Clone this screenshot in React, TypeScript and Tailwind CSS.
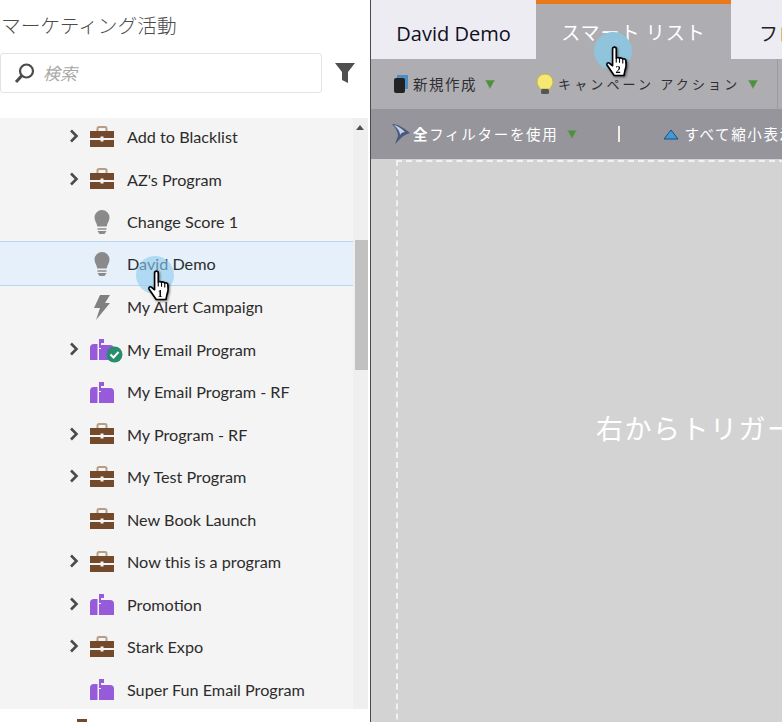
const jp = '"Noto Sans CJK JP", sans-serif';

type Kind = 'case' | 'bulb' | 'bolt' | 'mail' | 'mailOk';

const rows: { label: string; kind: Kind; arrow?: boolean; selected?: boolean }[] = [
  { label: 'Add to Blacklist', kind: 'case', arrow: true },
  { label: "AZ's Program", kind: 'case', arrow: true },
  { label: 'Change Score 1', kind: 'bulb' },
  { label: 'David Demo', kind: 'bulb', selected: true },
  { label: 'My Alert Campaign', kind: 'bolt' },
  { label: 'My Email Program', kind: 'mailOk', arrow: true },
  { label: 'My Email Program - RF', kind: 'mail' },
  { label: 'My Program - RF', kind: 'case', arrow: true },
  { label: 'My Test Program', kind: 'case', arrow: true },
  { label: 'New Book Launch', kind: 'case' },
  { label: 'Now this is a program', kind: 'case', arrow: true },
  { label: 'Promotion', kind: 'mail', arrow: true },
  { label: 'Stark Expo', kind: 'case', arrow: true },
  { label: 'Super Fun Email Program', kind: 'mail' },
];

function Briefcase() {
  return (
    <svg width="26" height="22" viewBox="0 0 26 22">
      <path d="M8.500 5V2.500A1.500 1.500 0 0 1 10 1h6a1.500 1.500 0 0 1 1.500 1.500V5" fill="none" stroke="#b89c86" strokeWidth="2" />
      <path d="M1 5h24v7H14.500v-1.500h-3V12H1z" fill="#734a2c" />
      <path d="M1 14h10.500v1.500h3V14H25v7H1z" fill="#734a2c" />
    </svg>
  );
}

function Bulb() {
  return (
    <svg width="16" height="26" viewBox="0 0 16 26">
      <path d="M8 1a7.500 7.500 0 0 1 7.500 7.500c0 3.400-2.300 5.400-2.800 9H3.300C2.800 13.900.5 11.900.5 8.500A7.500 7.500 0 0 1 8 1z" fill="#8a8a8a" />
      <path d="M3.500 19h9v2h-9z" fill="#a5a5a5" />
      <path d="M3.500 22h9L10.500 25h-5z" fill="#8a8a8a" />
    </svg>
  );
}

function Bolt() {
  return (
    <svg width="18" height="26" viewBox="0 0 18 26">
      <path d="M7 1h10l-5 8h5L3 26l4-12H1z" fill="#808080" />
    </svg>
  );
}

function Mailbox({ ok }: { ok?: boolean }) {
  return (
    <span className="relative block h-[22px] w-[26px]">
      <svg width="26" height="22" viewBox="0 0 26 22">
        <path d="M10 1h5v4h-3v5h-2z" fill="#965ada" />
        <path d="M5 6h3.500v16H1V10a4 4 0 0 1 4-4z" fill="#965ada" />
        <path d="M12 7h9a4 4 0 0 1 4 4v11H10V11h2z" fill="#965ada" />
      </svg>
      {ok && (
        <svg className="absolute left-[17px] top-[8px]" width="17" height="17" viewBox="0 0 17 17">
          <circle cx="8.500" cy="8.500" r="8" fill="#268e6c" />
          <path d="M4.500 8.500l3 3 5-5.500" fill="none" stroke="#fff" strokeWidth="2" />
        </svg>
      )}
    </span>
  );
}

function RowIcon({ kind }: { kind: Kind }) {
  if (kind === 'case') return <Briefcase />;
  if (kind === 'bulb') return <Bulb />;
  if (kind === 'bolt') return <Bolt />;
  return <Mailbox ok={kind === 'mailOk'} />;
}

// click marker: blue spot, hand cursor with step number
function Hand({ n, className }: { n: number; className: string }) {
  return (
    <div className={`absolute h-[38px] w-[38px] rounded-full ${className}`}>
      <svg className="absolute left-[11px] top-[14px] drop-shadow-[1px_1px_1px_rgba(0,0,0,0.5)]" width="26" height="33" viewBox="0 0 24 30">
        <path
          d="M7 2.500a1.700 1.700 0 0 1 3.400 0V11c.6-.8 2.600-.8 3 .3.600-.8 2.600-.7 3 .6.800-.6 2.600-.3 2.800 1.100.5 3 .3 7-.8 9.500L17.500 27H8.500L2 17.500c-1-1.600.8-3 2.200-1.800L7 18z"
          fill="#fff"
          stroke="#000"
          strokeWidth="1.500"
          strokeLinejoin="round"
        />
        <path d="M10.400 11v4M13.400 11.300v4M16.400 11.900v4" stroke="#000" strokeWidth="1" />
        <text x="12" y="24.500" textAnchor="middle" fontSize="9.500" fontWeight="700" fontFamily="Liberation Serif, serif" fill="#000">{n}</text>
      </svg>
    </div>
  );
}

function Caret() {
  return (
    <svg className="ml-[8px] shrink-0" width="10" height="9" viewBox="0 0 10 9">
      <path d="M0 0h10L5 9z" fill="#7d8c72" />
      <path d="M1.500 1h7L5 7.500z" fill="#3c9a2e" />
    </svg>
  );
}

export default function App() {
  return (
    <div className="relative flex h-[722px] w-[782px] overflow-hidden bg-white" style={{ fontFamily: '"Lato", sans-serif' }}>
      {/* Left panel */}
      <aside className="flex w-[370px] shrink-0 flex-col bg-white">
        <h2 className="mt-[11px] h-[28px] pl-[1px] text-[19.700px] font-light leading-[28px] text-[#4b4b4b]" style={{ fontFamily: jp }}>マーケティング活動</h2>
        <div className="mt-[14px] flex items-center">
          <div className="flex h-[40px] w-[322px] items-center rounded-[3px] border border-[#e3e3e3] pl-[13px]">
            <svg width="22" height="22" viewBox="0 0 22 22">
              <circle cx="12.500" cy="9" r="6.500" fill="none" stroke="#4b4b4b" strokeWidth="2.200" />
              <path d="M8 13.500L2 20" stroke="#4b4b4b" strokeWidth="3" />
            </svg>
            <span className="ml-[7px] text-[17px] italic text-[#a8a8a8]" style={{ fontFamily: jp }}>検索</span>
          </div>
          <svg className="ml-[13px]" width="20" height="22" viewBox="0 0 20 22">
            <path d="M0 1h20l-7 9v11l-6-3v-8z" fill="#4f4f4f" />
          </svg>
        </div>
        <div className="mt-[25px] flex h-[591px] w-[368px]">
          <ul className="h-full w-[353px] overflow-hidden bg-[#f4f4f4]">
            {rows.map((r, i) => (
              <li
                key={r.label}
                className={`flex items-center ${i === 0 ? '-mt-[2px]' : ''} ${r.selected ? '-mt-[3px] mb-[0.500px] h-[45px] border-y border-[#b5d6f5] bg-[#e5f0fb] pt-[3px]' : 'h-[42.500px]'}`}
              >
                <span className="flex w-[89px] justify-end pb-[2px] pr-[10px]">
                  {r.arrow && (
                    <svg width="10" height="14" viewBox="0 0 10 14">
                      <path d="M2 1.500L7.500 7 2 12.500" fill="none" stroke="#4b4b4b" strokeWidth="2.600" />
                    </svg>
                  )}
                </span>
                <span className="flex w-[38px] shrink-0 items-center justify-start pb-[1px]">
                  <span className="flex w-[26px] justify-center">
                    <RowIcon kind={r.kind} />
                  </span>
                </span>
                <span className="text-[16.200px] text-[#2c2c2c]">{r.label}</span>
              </li>
            ))}
          </ul>
          <div className="relative h-full w-[15px] bg-[#efefef]">
            <span className="absolute left-[3px] top-[7px] h-0 w-0 border-x-[4px] border-b-[5px] border-x-transparent border-b-[#505050]" />
            <span className="absolute left-[2px] top-[122px] h-[130px] w-[13px] bg-[#c1c1c1]" />
          </div>
        </div>
        <div className="relative h-[13px]">
          <span className="absolute left-[77px] top-[10px] h-[3px] w-[10px] bg-[#734a2c]" />
        </div>
      </aside>

      {/* Right panel */}
      <main className="flex min-w-0 flex-1 flex-col border-l border-[#4a4a4a]">
        <nav className="flex h-[59px] shrink-0 overflow-hidden bg-[#edecf2] text-[19px]" style={{ fontFamily: jp }}>
          <div className="flex w-[165px] shrink-0 items-center justify-center pt-[8px] text-[20px] text-[#0f0f1e]" style={{ fontFamily: '"Open Sans", sans-serif' }}>David Demo</div>
          <div className="flex w-[195px] shrink-0 items-center justify-center border-t-4 border-[#e8781a] bg-[#aeadb2] pt-[2px] tracking-[1px] text-white">スマート リスト</div>
          <div className="flex shrink-0 items-center pl-[28px] pt-[8px] whitespace-nowrap tracking-[1px] text-[#222]">フロー</div>
        </nav>
        <div className="flex h-[50px] shrink-0 items-center bg-[#aeadb2] pl-[22px] text-[14.500px] text-[#2e2e33]" style={{ fontFamily: jp }}>
          <svg className="shrink-0" width="16" height="20" viewBox="0 0 16 20">
            <path d="M4 1h11v14H4z" fill="#4b8dc4" />
            <rect x="1" y="4" width="11" height="15" rx="2" fill="#232323" />
          </svg>
          <span className="ml-[4px] tracking-[1.500px]">新規作成</span>
          <Caret />
          <svg className="ml-[41px] shrink-0" width="18" height="22" viewBox="0 0 18 22">
            <path d="M9 1a8 8 0 0 1 8 8c0 3-2 4.500-3 7H4c-1-2.500-3-4-3-7a8 8 0 0 1 8-8z" fill="#f6e874" stroke="#c9b83f" />
            <rect x="5" y="16" width="8" height="5" rx="1.500" fill="#555" />
          </svg>
          <span className="ml-[4px] whitespace-nowrap text-[13px] tracking-[3.150px]">キャンペーン アクション</span>
          <Caret />
          <span className="ml-[19px] h-[50px] w-px shrink-0 bg-[#9c9ba0]" />
        </div>
        <div className="flex h-[50px] shrink-0 items-center overflow-hidden bg-[#96959b] pl-[20px] text-[14.500px] text-white" style={{ fontFamily: jp }}>
          <svg className="shrink-0" width="20" height="22" viewBox="0 0 20 22">
            <path d="M1 1c6 0 12 4 18 9-4 1-7 3-9 5l-6 6 3-8c0-4-2-8-6-12z" fill="#47597c" />
            <path d="M3 2c4 1 8 4 11 7-2 0-4 1-5 3 0-4-3-7-6-10z" fill="#c5d2e6" />
          </svg>
          <span className="ml-[2px] whitespace-nowrap tracking-[1.700px]"><b>全</b>フィルターを使用</span>
          <Caret />
          <span className="ml-[41px] h-[16px] w-[2px] shrink-0 bg-[#f3ece0]" />
          <svg className="ml-[43px] shrink-0" width="16" height="11" viewBox="0 0 16 11">
            <path d="M8 1l7 9H1z" fill="#3f9ad8" stroke="#1d4f80" />
          </svg>
          <span className="ml-[6px] whitespace-nowrap tracking-[1.600px]">すべて縮小表示</span>
        </div>
        <div className="flex-1 overflow-hidden bg-[#d3d3d3] pl-[25px] pt-px">
          <div className="flex h-[620px] w-[500px] items-center border-l-2 border-t-2 border-dashed border-[#f1f1f1] pb-[85px] pl-[198px]">
            <span className="whitespace-nowrap text-[27px] tracking-[1.500px] text-white" style={{ fontFamily: jp }}>右からトリガーをドラッグ</span>
          </div>
        </div>
      </main>

      {/* Tutorial markers over the page */}
      <Hand n={1} className="left-[136px] top-[256px] bg-[#8ccbee]/60" />
      <Hand n={2} className="left-[594px] top-[32px] bg-[#90c4dc]" />
    </div>
  );
}
